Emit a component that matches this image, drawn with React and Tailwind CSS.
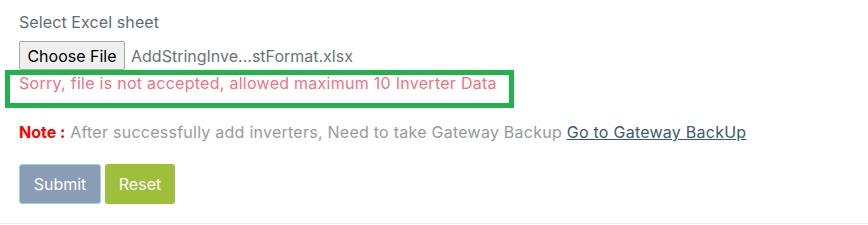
export default function App() {
  const font = { fontFamily: 'Inter, "Open Sans", sans-serif' };
  return (
    <div className="w-[868px] h-[225px] bg-white" style={font}>
      <div className="h-[224px] border-b border-[#ececec] bg-white">
        <div className="pl-[19px] pt-[11px] text-[16px] leading-[22px] tracking-[0.1px] text-[#5d6b7b]">Select Excel sheet</div>
        <div className="mt-[8px] flex items-center h-[29px]">
          <div className="ml-[19px] h-[29px] w-[106px] flex items-center justify-center border border-[#a8a8a8] bg-[#efefef] text-[16px] text-black rounded-[2px]">
            Choose File
          </div>
          <span className="ml-[6px] text-[16px] text-[#6a737c]">AddStringInve...stFormat.xlsx</span>
        </div>
        <div className="ml-[5px] w-[509px] h-[38px] border-[5px] border-[#22b14c]">
          <div className="pl-[9px] pt-[1px] text-[16px] leading-[14px] tracking-[0.27px] text-[#f07482]">
            Sorry, file is not accepted, allowed maximum 10 Inverter Data
          </div>
        </div>
        <div className="pl-[19px] mt-[14px] text-[16px] leading-[20px] tracking-[0.25px] text-[#979a9e]">
          <span className="font-bold text-[#ff0000] tracking-normal">Note :</span> After successfully add inverters, Need to take Gateway Backup{" "}
          <a className="underline text-[#3e5874]" href="#">Go to Gateway BackUp</a>
        </div>
        <div className="pl-[19px] mt-[22px] flex gap-[4px]">
          <button className="w-[82px] h-[40px] rounded-[3px] bg-[#8a9db5] border border-[#8fd3ec] text-white text-[16px]">Submit</button>
          <button className="w-[70px] h-[40px] rounded-[3px] bg-[#9dbf3a] text-white text-[16px]">Reset</button>
        </div>
      </div>
    </div>
  );
}
